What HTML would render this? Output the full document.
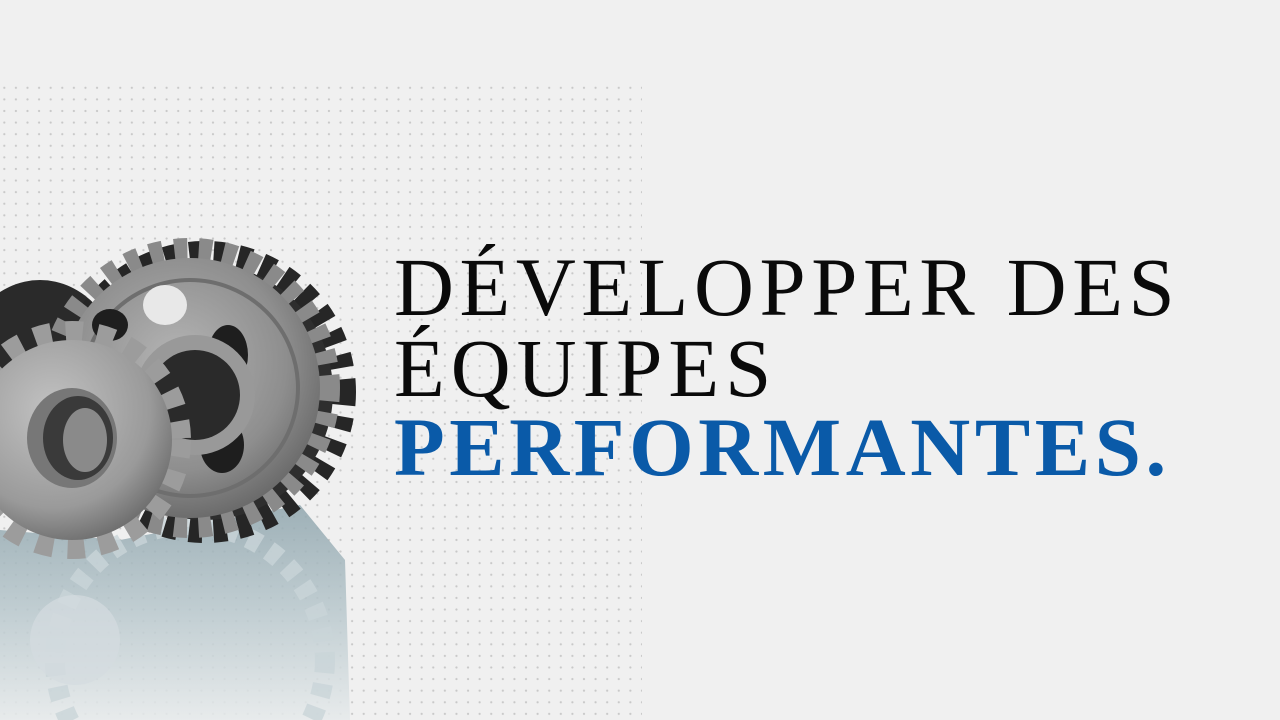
<!DOCTYPE html>
<html><head><meta charset="utf-8"><style>
html,body{margin:0;padding:0;width:1280px;height:720px;overflow:hidden;background:#f0f0f0;position:relative}
.dots{position:absolute;left:0;top:82px;width:642px;height:638px;
background-image:radial-gradient(circle,#c8c8c8 0.9px,transparent 1.3px);background-size:11.6px 11.6px;background-position:-1.5px 0}
.t{position:absolute;left:394px;font-family:"Liberation Serif",serif;font-size:83px;line-height:80px;white-space:nowrap;color:#0a0a0a}
svg{display:block}
</style></head><body>
<div class="dots"></div>
<svg style="position:absolute;left:0;top:0" width="360" height="720" viewBox="0 0 360 720">
<defs>
<radialGradient id="g1" cx="0.45" cy="0.4" r="0.7"><stop offset="0" stop-color="#b5b5b5"/><stop offset="0.6" stop-color="#8e8e8e"/><stop offset="1" stop-color="#5a5a5a"/></radialGradient>
<radialGradient id="g2" cx="0.4" cy="0.35" r="0.7"><stop offset="0" stop-color="#c2c2c2"/><stop offset="0.7" stop-color="#9a9a9a"/><stop offset="1" stop-color="#6a6a6a"/></radialGradient>
<linearGradient id="refl" x1="0" y1="0" x2="0" y2="1"><stop offset="0" stop-color="#8fa5ad"/><stop offset="0.5" stop-color="#b9c8cd"/><stop offset="1" stop-color="#e6eaeb"/></linearGradient>
</defs>
<path d="M0 530 L120 540 L300 505 L345 560 L350 720 L0 720Z" fill="url(#refl)" opacity="0.85"/>
<circle cx="190" cy="660" r="135" fill="none" stroke="#c9d4d8" stroke-width="20" stroke-dasharray="13 11" opacity="0.8"/>
<circle cx="75" cy="640" r="45" fill="#d4dcdf" opacity="0.7"/>
<ellipse cx="40" cy="370" rx="80" ry="90" fill="#2a2a2a"/>
<circle cx="205" cy="392" r="138" fill="none" stroke="#262626" stroke-width="26" stroke-dasharray="13 11.4"/>
<circle cx="205" cy="392" r="128" fill="#2e2e2e"/>
<circle cx="190" cy="388" r="138" fill="none" stroke="#8a8a8a" stroke-width="24" stroke-dasharray="13 11.4"/>
<circle cx="190" cy="388" r="130" fill="url(#g1)"/>
<circle cx="190" cy="388" r="108" fill="none" stroke="#6e6e6e" stroke-width="4"/>
<ellipse cx="165" cy="305" rx="22" ry="20" fill="#e8e8e8"/>
<ellipse cx="228" cy="355" rx="20" ry="30" fill="#1e1e1e"/>
<ellipse cx="222" cy="445" rx="22" ry="28" fill="#1e1e1e"/>
<ellipse cx="110" cy="325" rx="18" ry="16" fill="#1e1e1e"/>
<circle cx="195" cy="395" r="60" fill="#999"/>
<circle cx="195" cy="395" r="45" fill="#2a2a2a"/>
<circle cx="72" cy="440" r="108" fill="none" stroke="#9c9c9c" stroke-width="22" stroke-dasharray="17 14.4"/>
<circle cx="72" cy="440" r="100" fill="url(#g2)"/>
<ellipse cx="72" cy="438" rx="45" ry="50" fill="#777"/>
<ellipse cx="78" cy="438" rx="35" ry="42" fill="#3a3a3a"/>
<ellipse cx="85" cy="440" rx="22" ry="32" fill="#8a8a8a"/>
</svg>
<div class="t" style="top:247px;letter-spacing:5.6px">DÉVELOPPER DES</div>
<div class="t" style="top:328px;letter-spacing:6px">ÉQUIPES</div>
<div class="t" style="top:407px;letter-spacing:4.6px;font-weight:bold;color:#0a5aa8">PERFORMANTES.</div>
</body></html>
